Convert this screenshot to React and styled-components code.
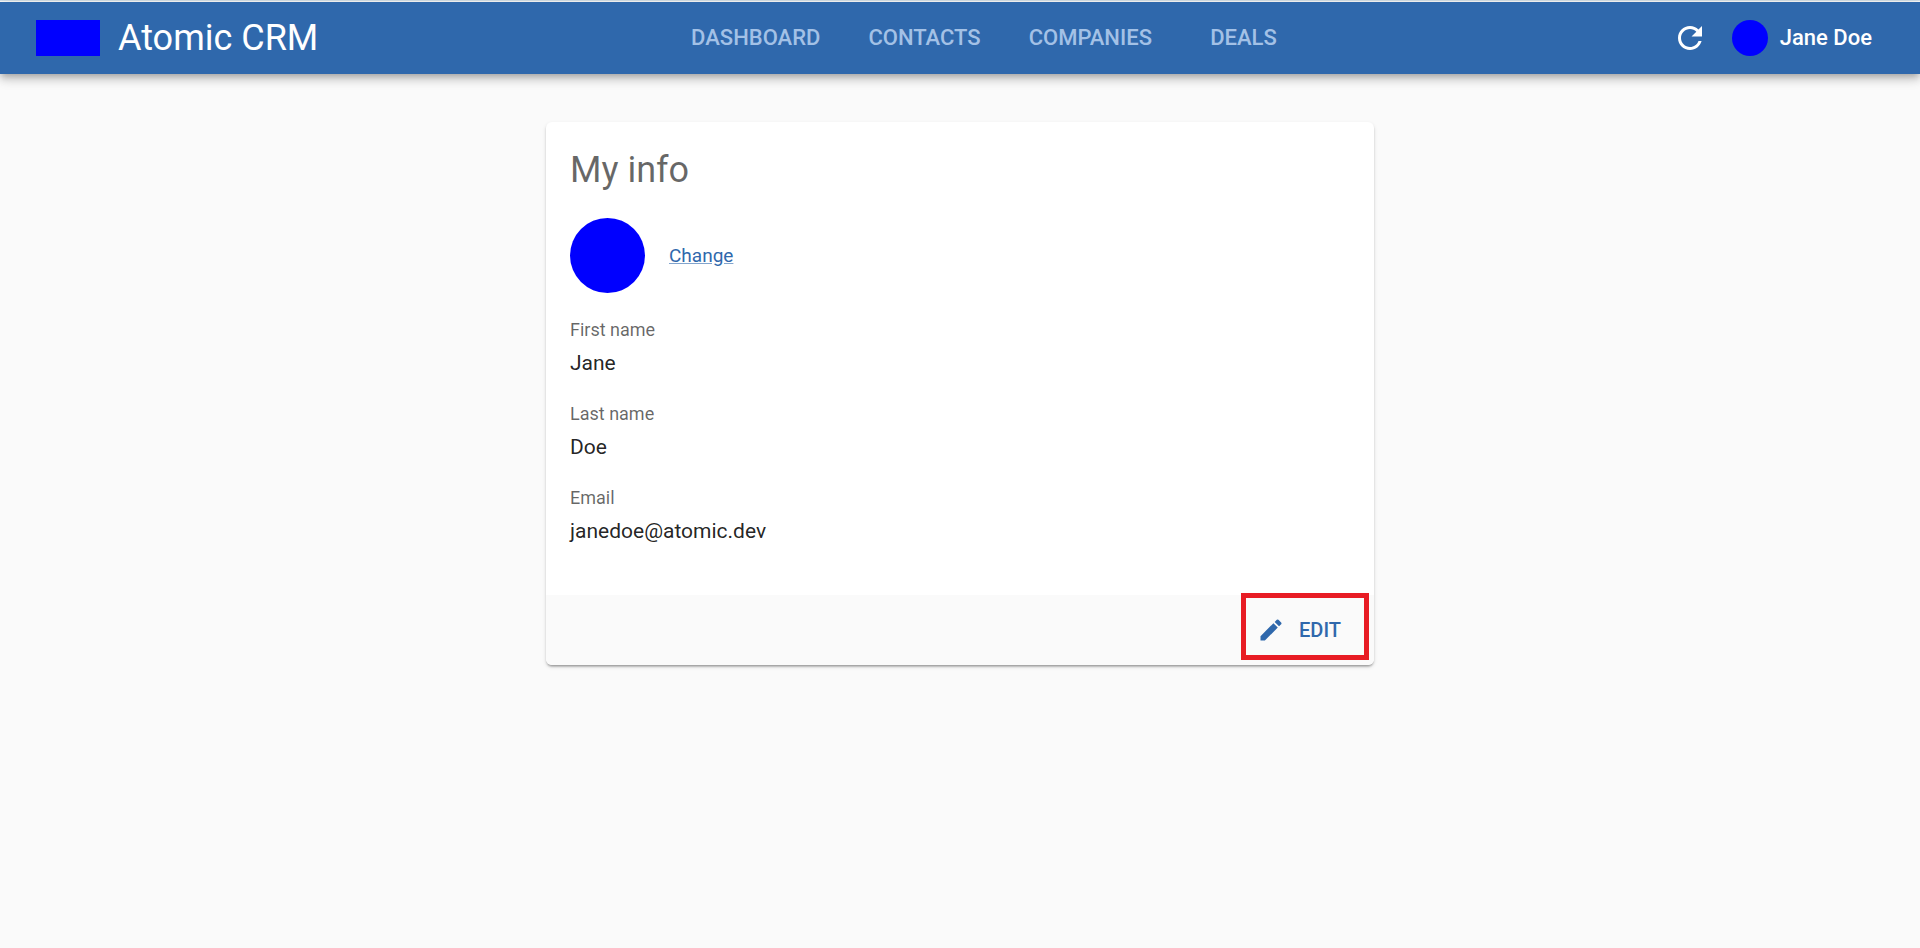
import React from "react";
import styled, { createGlobalStyle } from "styled-components";

const primary = "#2f68ac";

const GlobalStyle = createGlobalStyle`
  *, *::before, *::after { box-sizing: border-box; }
  body {
    margin: 0;
    background: #fafafa;
    color: rgba(0, 0, 0, 0.87);
    font-family: Roboto, "Liberation Sans", sans-serif;
  }
  button {
    margin: 0;
    padding: 0;
    border: 0;
    background: none;
    font: inherit;
    color: inherit;
    cursor: pointer;
  }
`;

const Page = styled.div`
  min-height: 100vh;
  border-top: 1px solid #d3dfe8;
`;

const AppBar = styled.header`
  display: flex;
  align-items: center;
  justify-content: space-between;
  height: 72px;
  margin-top: 1px;
  padding: 0 36px;
  background: ${primary};
  color: #fff;
  box-shadow: 0 3px 6px -2px rgba(0, 0, 0, 0.2),
    0 6px 8px 0 rgba(0, 0, 0, 0.14), 0 2px 15px 0 rgba(0, 0, 0, 0.12);
`;

const Brand = styled.a`
  display: flex;
  align-items: center;
  gap: 18px;
  color: inherit;
  text-decoration: none;
  font-size: 36px;
  line-height: 48px;
`;

const Logo = styled.span`
  width: 64px;
  height: 36px;
  background: #0000ff;
`;

const Nav = styled.nav`
  display: flex;
`;

const NavLink = styled.a`
  min-width: 135px;
  padding: 0 24px;
  color: #a3c1e6;
  text-align: center;
  text-decoration: none;
  font-size: 22px;
  font-weight: 500;
  line-height: 72px;
`;

const Actions = styled.div`
  display: flex;
  align-items: center;
`;

const IconButton = styled.button`
  display: flex;
  && { padding: 12px; }
`;

const Icon = styled.svg`
  display: block;
  width: ${(p) => p.$size}px;
  height: ${(p) => p.$size}px;
  fill: currentColor;
`;

const UserButton = styled.button`
  display: flex;
  align-items: center;
  gap: 12px;
  && {
    padding: 12px;
    font-size: 22px;
    font-weight: 500;
    line-height: 36px;
  }
`;

const Avatar = styled.span`
  flex: none;
  width: ${(p) => p.$size}px;
  height: ${(p) => p.$size}px;
  border-radius: 50%;
  background: #0000ff;
`;

const Main = styled.main`
  max-width: 900px;
  margin: 48px auto 0;
  padding: 0 36px;
`;

const Card = styled.section`
  border-radius: 6px;
  background: #fff;
  box-shadow: 0 3px 2px -2px rgba(0, 0, 0, 0.2),
    0 2px 2px 0 rgba(0, 0, 0, 0.14), 0 2px 4px 0 rgba(0, 0, 0, 0.12);
`;

const CardContent = styled.div`
  padding: 24px 24px 49px;
`;

const Title = styled.h1`
  margin: 0 0 24px;
  color: rgba(0, 0, 0, 0.6);
  font-size: 36px;
  font-weight: 400;
  line-height: 48px;
`;

const AvatarRow = styled.div`
  display: flex;
  align-items: center;
  gap: 24px;
  margin-bottom: 25px;
`;

const ChangeButton = styled.button`
  && {
    color: ${primary};
    font-size: 19px;
    line-height: 24px;
    text-decoration: underline;
    text-decoration-color: rgba(47, 104, 172, 0.6);
  }
`;

const Fields = styled.dl`
  display: grid;
  gap: 24px;
  margin: 0;
`;

const Field = styled.div`
  display: grid;
  gap: 6px;
`;

const FieldLabel = styled.dt`
  color: rgba(0, 0, 0, 0.6);
  font-size: 18px;
  line-height: 24px;
`;

const FieldValue = styled.dd`
  margin: 0;
  font-size: 21px;
  line-height: 30px;
`;

const CardFooter = styled.footer`
  display: flex;
  align-items: center;
  justify-content: flex-end;
  height: 70px;
  padding: 0 24px;
  border-radius: 0 0 6px 6px;
  background: #fafafa;
`;

const EditButton = styled.button`
  position: relative;
  display: flex;
  align-items: center;
  gap: 14px;
  && {
    padding: 6px 9px;
    color: ${primary};
    font-size: 20px;
    font-weight: 500;
    line-height: 30px;
  }
`;

const Highlight = styled.span`
  position: absolute;
  inset: -16px -19px -9px -7px;
  border: 5px solid #e81c24;
  pointer-events: none;
`;

const links = ["DASHBOARD", "CONTACTS", "COMPANIES", "DEALS"];

const info = [
  { label: "First name", value: "Jane" },
  { label: "Last name", value: "Doe" },
  { label: "Email", value: "janedoe@atomic.dev" },
];

export default function App() {
  return (
    <Page>
      <GlobalStyle />
      <AppBar>
        <Brand href="#home">
          <Logo />
          Atomic CRM
        </Brand>
        <Nav>
          {links.map((link) => (
            <NavLink key={link} href={`#${link.toLowerCase()}`}>
              {link}
            </NavLink>
          ))}
        </Nav>
        <Actions>
          <IconButton type="button" aria-label="Refresh">
            <Icon $size={36} viewBox="0 0 24 24" aria-hidden="true">
              <path d="M17.65 6.35C16.2 4.9 14.21 4 12 4c-4.42 0-7.99 3.58-7.99 8s3.57 8 7.99 8c3.73 0 6.84-2.55 7.73-6h-2.08c-.82 2.33-3.04 4-5.65 4-3.31 0-6-2.69-6-6s2.69-6 6-6c1.66 0 3.14.69 4.22 1.78L13 11h7V4z" />
            </Icon>
          </IconButton>
          <UserButton type="button">
            <Avatar $size={36} />
            Jane Doe
          </UserButton>
        </Actions>
      </AppBar>
      <Main>
        <Card>
          <CardContent>
            <Title>My info</Title>
            <AvatarRow>
              <Avatar $size={75} />
              <ChangeButton type="button">Change</ChangeButton>
            </AvatarRow>
            <Fields>
              {info.map(({ label, value }) => (
                <Field key={label}>
                  <FieldLabel>{label}</FieldLabel>
                  <FieldValue>{value}</FieldValue>
                </Field>
              ))}
            </Fields>
          </CardContent>
          <CardFooter>
            <EditButton type="button">
              <Icon $size={28} viewBox="0 0 24 24" aria-hidden="true">
                <path d="M3 17.25V21h3.75L17.81 9.94l-3.75-3.75zM20.71 7.04c.39-.39.39-1.02 0-1.41l-2.34-2.34a.9959.9959 0 0 0-1.41 0l-1.83 1.83 3.75 3.75z" />
              </Icon>
              EDIT
              <Highlight />
            </EditButton>
          </CardFooter>
        </Card>
      </Main>
    </Page>
  );
}
